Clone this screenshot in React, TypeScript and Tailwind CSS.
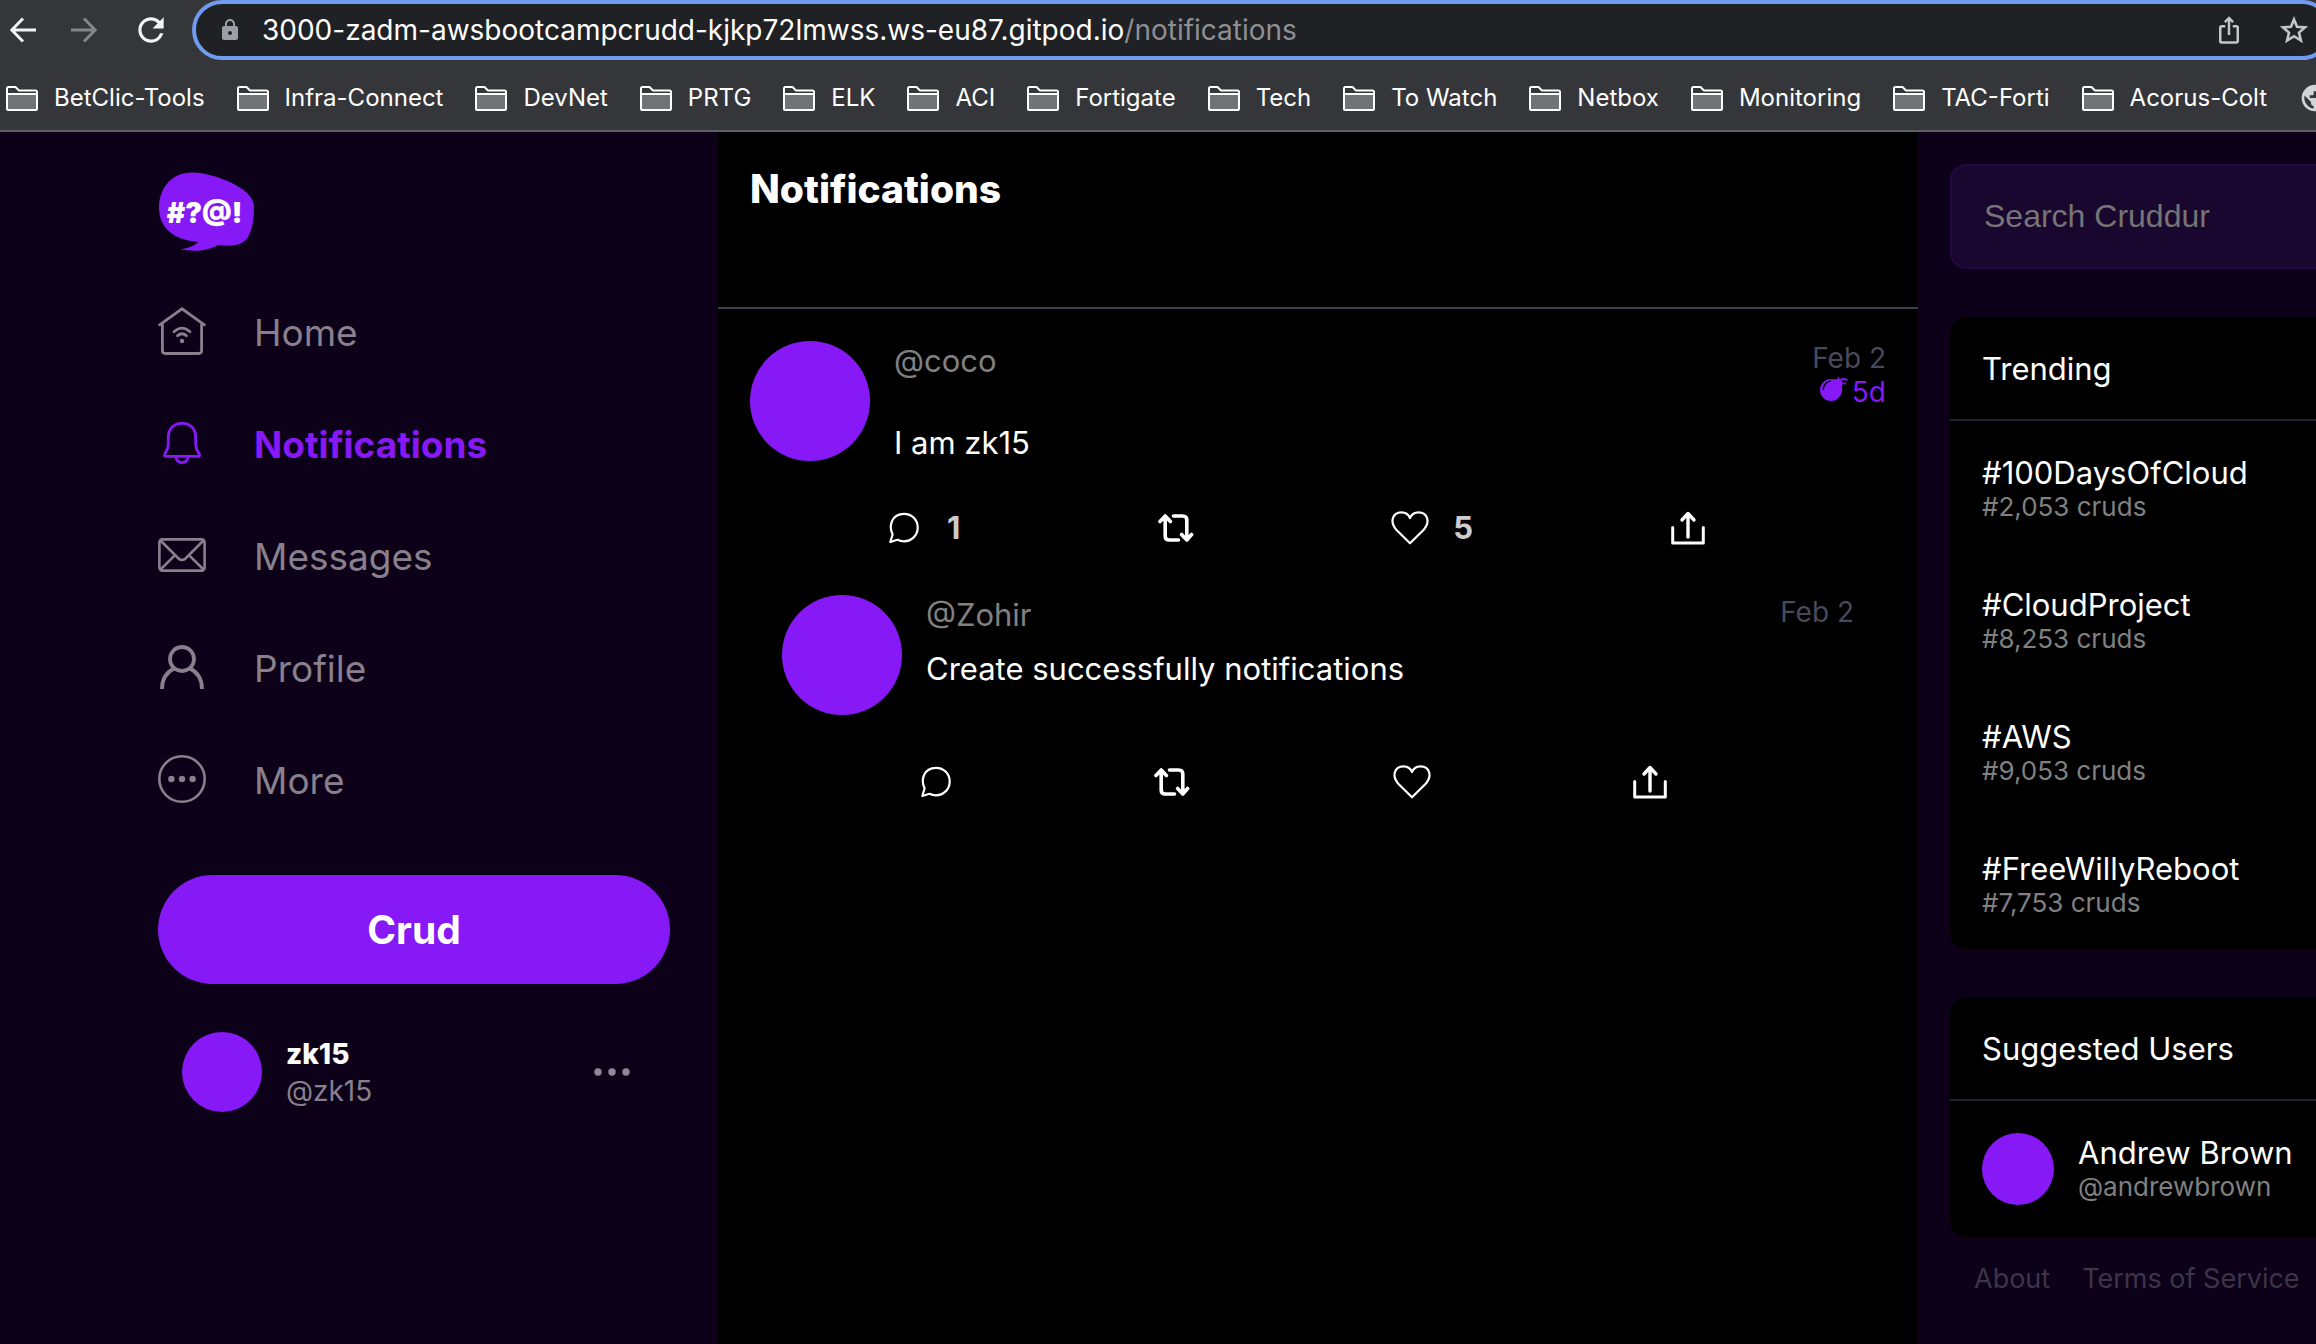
import React from "react";
import { MdRefresh, MdLock, MdIosShare, MdPublic } from "react-icons/md";

const bookmarks = [
  "BetClic-Tools", "Infra-Connect", "DevNet", "PRTG", "ELK", "ACI", "Fortigate",
  "Tech", "To Watch", "Netbox", "Monitoring", "TAC-Forti", "Acorus-Colt",
];

const trends = [
  { tag: "#100DaysOfCloud", count: "#2,053 cruds" },
  { tag: "#CloudProject", count: "#8,253 cruds" },
  { tag: "#AWS", count: "#9,053 cruds" },
  { tag: "#FreeWillyReboot", count: "#7,753 cruds" },
];

function FolderIcon() {
  return (
    <svg className="h-[25px] w-8 shrink-0" viewBox="0 0 32 25" fill="none">
      <path d="M1 23V2.5Q1 1 2.5 1H9.5L13 4.5H29.5Q31 4.5 31 6V23Q31 24 30 24H2Q1 24 1 23Z" stroke="#fff" strokeWidth="2" />
      <rect x="2" y="8" width="28" height="15" fill="#727376" />
      <path d="M1 8H31" stroke="#fff" strokeWidth="2" />
    </svg>
  );
}

function ArrowLeft({ className }: { className: string }) {
  return (
    <svg className={className} viewBox="0 0 26 26" fill="none" stroke="currentColor" strokeWidth="3">
      <path d="M26 13H2M13 1.5L1.8 13L13 24.5" />
    </svg>
  );
}

function Logo() {
  return (
    <svg className="h-[79px] w-24" viewBox="0 0 96 79" role="img" aria-label="Cruddur">
      <path
        d="M35 .5C56 1 95 16 95.8 33C96.2 48 94 58 90 65C85 73 75 75 60 73C50 79 36 80 22.5 77.3C30 76 36 74 40 70C16 68 1 56 1 36C1 16 14 0 35 .5Z"
        fill="#8619f5"
      />
      <text x="46.500" y="51" textAnchor="middle" fill="#fff" fontFamily="Inter, sans-serif" fontSize="28" fontWeight="900">
        #?@!
      </text>
    </svg>
  );
}

const navIcon = "size-12 shrink-0";

function HomeIcon() {
  return (
    <svg className={navIcon} viewBox="0 0 48 48" fill="none" stroke="currentColor" strokeWidth="2.8" strokeLinecap="round">
      <path d="M1.600 17.800L24 1.800L46.400 17.800" />
      <path d="M4.400 17V43.500Q4.400 46.500 7.400 46.500H40.600Q43.600 46.500 43.600 43.500V17" />
      <path d="M16 24.700Q24 17.500 32 24.700M19.500 28.800Q24 24.800 28.500 28.800" />
      <circle cx="24" cy="34" r="2.200" fill="currentColor" stroke="none" />
    </svg>
  );
}

function BellIcon() {
  return (
    <svg className={navIcon} viewBox="0 0 48 48" fill="none" stroke="currentColor" strokeWidth="2.8" strokeLinejoin="round">
      <path d="M24 4.300C15.500 4.300 10.300 10 10.300 18V25C10.300 30 9 31.500 6.800 35C5.800 36.800 6.400 37.400 8 37.400H40C41.600 37.400 42.200 36.800 41.200 35C39 31.500 37.700 30 37.700 25V18C37.700 10 32.500 4.300 24 4.300Z" />
      <path d="M18 38C18.500 41.800 21 43.600 24 43.600C27 43.600 29.500 41.800 30 38" />
    </svg>
  );
}

function MailIcon() {
  return (
    <svg className={navIcon} viewBox="0 0 48 48" fill="none" stroke="currentColor" strokeWidth="2.600">
      <rect x="1.400" y="8.400" width="45.200" height="31.200" rx="3" />
      <path d="M2.500 9.500L20.500 27.500Q24 30.500 27.500 27.500L45.500 9.500M2.500 38.500L16.800 24.300M45.500 38.500L31.200 24.300" />
    </svg>
  );
}

function ProfileIcon() {
  return (
    <svg className={navIcon} viewBox="0 0 48 48" fill="none" stroke="currentColor" strokeWidth="3.800">
      <circle cx="24" cy="16" r="12" />
      <path d="M4 46C4 36 9 29 16 25.500M44 46C44 36 39 29 32 25.500" />
    </svg>
  );
}

function MoreIcon() {
  return (
    <svg className={navIcon} viewBox="0 0 48 48" fill="none">
      <circle cx="24" cy="24" r="22.700" stroke="currentColor" strokeWidth="2.600" />
      <circle cx="13.400" cy="24" r="3.200" fill="currentColor" />
      <circle cx="24" cy="24" r="3.200" fill="currentColor" />
      <circle cx="34.600" cy="24" r="3.200" fill="currentColor" />
    </svg>
  );
}

const nav = [
  { label: "Home", Icon: HomeIcon },
  { label: "Notifications", Icon: BellIcon, active: true },
  { label: "Messages", Icon: MailIcon },
  { label: "Profile", Icon: ProfileIcon },
  { label: "More", Icon: MoreIcon },
];

function ReplyIcon() {
  return (
    <svg className="h-8 w-[30px]" viewBox="0 0 30 32" fill="none" stroke="currentColor" strokeWidth="2.200" strokeLinejoin="round">
      <path d="M1.300 30L3.600 22.500C-.5 14 2.500 1.800 15 1.800C23 1.800 28.700 8 28.700 15.500C28.700 23.500 22.500 29.300 15 29.300C12.500 29.300 10.500 28.800 8.500 27.800Z" />
    </svg>
  );
}

function RepostIcon() {
  return (
    <svg className="h-7 w-9" viewBox="0 0 36 28" fill="none" stroke="currentColor" strokeWidth="3.600" strokeLinecap="round" strokeLinejoin="round">
      <path d="M2 7.500L7.200 2L12.400 7.500M7.200 3V22Q7.200 26 11.200 26H20.500" />
      <path d="M33.600 20.500L28.800 26L23.600 20.500M28.800 25V6Q28.800 2 24.800 2H15.500" />
    </svg>
  );
}

function HeartIcon() {
  return (
    <svg className="h-[34px] w-[38px]" viewBox="0 0 38 34" fill="none" stroke="currentColor" strokeWidth="2.200" strokeLinejoin="round">
      <path d="M19 32.300L6 19.500C-2 11 1.500 1.300 10.500 1.300C14.500 1.300 17.500 3.500 19 7C20.500 3.500 23.500 1.300 27.500 1.300C36.500 1.300 40 11 32 19.500Z" />
    </svg>
  );
}

function ShareIcon() {
  return (
    <svg className="h-[34px] w-[34px]" viewBox="0 0 34 34" fill="none" stroke="currentColor" strokeWidth="3" strokeLinecap="round" strokeLinejoin="round">
      <path d="M1.700 16.500V32H32.300V16.500" />
      <path d="M17 26V3M11 9L17 2.500L23 9" strokeWidth="3.400" />
    </svg>
  );
}

function BombIcon() {
  return (
    <svg className="mt-0.5 h-6 w-7" viewBox="0 0 28 24">
      <circle cx="11" cy="13" r="11" fill="currentColor" />
      <path d="M13 3L19 1.500L23.500 6L21 11Z" fill="currentColor" />
      <path d="M19.500 4Q22 .5 27.500 3.200" fill="none" stroke="currentColor" strokeWidth="2" />
      <path d="M18.500 0V2M24 6L26 7" stroke="currentColor" strokeWidth="1.500" />
      <path d="M3 13Q4 5 11 4" fill="none" stroke="#000" strokeWidth="1.500" />
    </svg>
  );
}

type PostProps = {
  handle: string; message: string; date: string; expires?: string;
  replies?: number; likes?: number; nested?: boolean;
};

function Post({ handle, message, date, expires, replies, likes, nested }: PostProps) {
  return (
    <article className={nested ? "px-16 pt-12" : "px-8 pt-8"}>
      <div className="flex h-[120px] gap-6">
        <div className="size-[120px] shrink-0 rounded-full bg-[#8619f5]" />
        <div className={nested ? "flex min-w-0 flex-1 flex-col gap-[14px]" : "flex min-w-0 flex-1 flex-col gap-[42px]"}>
          <a href="#profile" className="text-[#808080]">{handle}</a>
          <p>{message}</p>
        </div>
        <div className="text-right text-[28px] leading-[34px]">
          <div className="text-[#484a5c]">{date}</div>
          {expires && (
            <div className="flex justify-end gap-1 text-[#8619f5]">
              <BombIcon />
              <span>{expires}</span>
            </div>
          )}
        </div>
      </div>
      <div className="-mr-4 ml-[139px] mt-12 flex h-[38px]">
        <div className="flex grow items-center gap-7">
          <button aria-label="Reply"><ReplyIcon /></button>
          {replies && <span className="font-bold text-[#cccccc]">{replies}</span>}
        </div>
        <div className="flex grow items-center">
          <button aria-label="Repost"><RepostIcon /></button>
        </div>
        <div className="flex grow items-center gap-6">
          <button aria-label="Like"><HeartIcon /></button>
          {likes && <span className="font-bold text-[#cccccc]">{likes}</span>}
        </div>
        <div className="flex grow items-center">
          <button aria-label="Share"><ShareIcon /></button>
        </div>
      </div>
    </article>
  );
}

function Panel({ title, children }: { title: string; children: React.ReactNode }) {
  return (
    <section className="mt-12 overflow-hidden rounded-2xl bg-black">
      <h2 className="border-b-2 border-[#1f2430] px-8 pb-[30px] pt-8">{title}</h2>
      {children}
    </section>
  );
}

export default function App() {
  return (
    <div className="flex min-h-screen flex-col overflow-hidden bg-black font-['Inter',sans-serif] text-[31px] leading-[40px] text-white">
      <header className="border-b-2 border-[#5f6064] bg-[#35363a]">
        <div className="flex h-[60px] items-center">
          <div className="flex w-48 shrink-0 items-center justify-between pl-[10px] pr-[22px]">
            <button aria-label="Back"><ArrowLeft className="size-[26px] text-[#f1f3f4]" /></button>
            <button aria-label="Forward"><ArrowLeft className="size-[26px] rotate-180 text-[#85868a]" /></button>
            <button aria-label="Reload"><MdRefresh className="size-[38px] text-[#f1f3f4]" /></button>
          </div>
          <div className="-mr-4 flex h-full min-w-0 flex-1 items-center rounded-full border-4 border-[#6f9bf0] bg-[#202124] pl-[22px] pr-5">
            <MdLock className="size-6 shrink-0 text-[#9aa0a6]" />
            <div role="textbox" aria-label="Address" className="ml-5 min-w-0 flex-1 whitespace-nowrap text-[28px]">
              3000-zadm-awsbootcampcrudd-kjkp72lmwss.ws-eu87.gitpod.io
              <span className="text-[#8e8f93]">/notifications</span>
            </div>
            <button aria-label="Share page"><MdIosShare className="size-[30px] text-[#c4c5c8]" /></button>
            <button aria-label="Bookmark page" className="ml-9">
              <svg className="size-7" viewBox="0 0 28 28" fill="none" stroke="#c4c5c8" strokeWidth="2.600">
                <path d="M14 3.500L17 10.800L25 11.400L19 16.600L20.900 24.500L14 20.200L7.100 24.500L9 16.600L3 11.400L11 10.800Z" />
              </svg>
            </button>
          </div>
        </div>
        <nav className="-mr-8 flex h-[70px] items-center gap-8 overflow-hidden whitespace-nowrap pl-[6px] pt-1.5 text-2xl">
          {bookmarks.map((b) => (
            <a key={b} href="#bookmark" className="flex items-center gap-4"><FolderIcon />{b}</a>
          ))}
          <a href="#bookmark" aria-label="Website" className="shrink-0"><MdPublic className="size-8 text-[#d3d4d7]" /></a>
        </nav>
      </header>

      <div className="grid flex-1 grid-cols-[359fr_600fr_199fr]">
        <aside className="bg-[#0c0118] pl-[158px] pr-12 pt-10">
          <Logo />
          <nav className="mt-6">
            {nav.map(({ label, Icon, active }) => (
              <a
                key={label}
                href="#nav"
                className={
                  active
                    ? "flex h-28 items-center gap-12 text-[37px] leading-[46px] font-bold text-[#8619f5]"
                    : "flex h-28 items-center gap-12 text-[37px] leading-[46px] text-[#88808c]"
                }
              >
                <Icon />
                <span className="pt-1">{label}</span>
              </a>
            ))}
          </nav>
          <button className="mt-10 h-[109px] w-full rounded-full bg-[#8619f5] text-[39px] font-bold">Crud</button>
          <div className="mt-12 flex items-center gap-6 pl-6 pr-10 text-[28px] leading-[37px]">
            <div className="size-20 shrink-0 rounded-full bg-[#8619f5]" />
            <div className="flex-1 pt-0.5">
              <div className="font-extrabold">zk15</div>
              <div className="text-[#88808c]">@zk15</div>
            </div>
            <button aria-label="Account menu" className="text-[#918a96]">
              <svg className="h-2 w-9" viewBox="0 0 36 8" fill="currentColor">
                <circle cx="4" cy="4" r="3.700" />
                <circle cx="18" cy="4" r="3.700" />
                <circle cx="32" cy="4" r="3.700" />
              </svg>
            </button>
          </div>
        </aside>

        <main className="min-w-0 bg-black">
          <div className="h-[177px] border-b-2 border-[#3a404d] px-8 pt-8">
            <h1 className="text-[39px] leading-[50px] font-extrabold">Notifications</h1>
          </div>
          <Post handle="@coco" message="I am zk15" date="Feb 2" expires="5d" replies={1} likes={5} />
          <Post handle="@Zohir" message="Create successfully notifications" date="Feb 2" nested />
        </main>

        <aside className="min-w-0 overflow-hidden bg-[#0c0118] pl-8 pt-8">
          <div className="-mr-8">
            <input
              type="search"
              aria-label="Search Cruddur"
              placeholder="Search Cruddur"
              className="block h-[105px] w-full rounded-2xl border-2 border-[#240745] bg-[#1a072f] px-8 font-['Liberation_Sans',sans-serif] text-[32px] placeholder:text-[#757575]"
            />
            <Panel title="Trending">
              {trends.map((t) => (
                <a key={t.tag} href="#trend" className="block p-8">
                  <div>{t.tag}</div>
                  <div className="text-[26px] leading-[28px] text-[#808080]">{t.count}</div>
                </a>
              ))}
            </Panel>
            <Panel title="Suggested Users">
              <a href="#user" className="flex h-[136px] gap-6 p-8">
                <div className="size-[72px] shrink-0 rounded-full bg-[#8619f5]" />
                <div className="whitespace-nowrap">
                  <div>Andrew Brown</div>
                  <div className="text-[26px] leading-[28px] text-[#808080]">@andrewbrown</div>
                </div>
              </a>
            </Panel>
            <footer className="flex gap-8 whitespace-nowrap px-6 pt-6 text-[27px] leading-[36px] text-[#3c3447]">
              <a href="#about">About</a>
              <a href="#terms">Terms of Service</a>
            </footer>
          </div>
        </aside>
      </div>
    </div>
  );
}
